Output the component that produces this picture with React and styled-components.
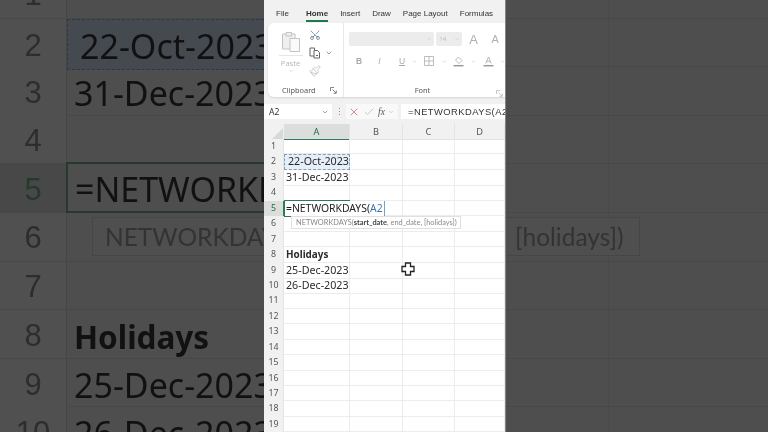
import React from "react";
import styled, { createGlobalStyle } from "styled-components";
import { Scissors, Paintbrush, ChevronDown, X, Check } from "lucide-react";

const GlobalStyle = createGlobalStyle`
  html, body { margin: 0; padding: 0; background: #4e4e4e; }
  #root { width: 768px; height: 432px; overflow: hidden; }
`;

const Page = styled.div`
  display: grid;
  grid-template-columns: 264px 241px 263px;
  width: 768px;
  height: 432px;
  overflow: hidden;
  filter: blur(0.35px);
  font-family: "Noto Sans", "Liberation Sans", sans-serif;
`;

/* dimmed zoomed-in sheet on both sides */
const Backdrop = styled.div`
  background: #4e4e4e;
  overflow: hidden;
  height: 432px;
  position: relative;
  ${(p) => p.$right && "border-left: 1px solid #858585; box-sizing: border-box;"}
`;

const BackdropRows = styled.div`
  margin-top: -30px;
`;

const BigRow = styled.div`
  position: relative;
  display: grid;
  grid-template-columns: ${(p) => (p.$right ? "103px 1fr" : "67px 1fr")};
  height: 48.6px;
  box-sizing: border-box;
  border-bottom: 1px solid #484848;
`;

const BigHead = styled.div`
  display: flex;
  align-items: center;
  justify-content: center;
  box-sizing: border-box;
  padding-top: 3px;
  font-family: "Liberation Sans", sans-serif;
  font-size: 31px;
  color: ${(p) => (p.$active ? "#243a2c" : "#2d2d2d")};
  background: ${(p) => (p.$active ? "#484848" : "#505050")};
  border-right: 1px solid #464646;
`;

const BigGap = styled.div`
  border-right: 1px solid #4a4a4a;
`;

const BigCell = styled.div`
  display: flex;
  align-items: center;
  white-space: nowrap;
  box-sizing: border-box;
  margin-top: ${(p) => (p.$active ? "-2px" : "0")};
  height: ${(p) => (p.$active ? "51px" : "auto")};
  margin-left: ${(p) => (p.$active ? "-1px" : "0")};
  padding-top: ${(p) => (p.$bold ? "5px" : "3px")};
  padding-left: ${(p) => (p.$copied ? "12px" : "7px")};
  font-size: ${(p) => (p.$bold ? "31.5px" : "34px")};
  font-weight: ${(p) => (p.$bold ? 700 : 400)};
  color: #111;
  background: ${(p) => (p.$copied ? "#454a50" : "transparent")};
  border: ${(p) =>
    p.$copied ? "1.5px dashed #2b3a44" : p.$active ? "2px solid #25392c" : "none"};
  border-right: none;
`;

const BigTip = styled.div`
  position: absolute;
  top: 4px;
  height: 39px;
  box-sizing: border-box;
  display: flex;
  align-items: center;
  white-space: nowrap;
  font-family: "Lato", sans-serif;
  font-size: 24.5px;
  color: #333;
  background: #4f4f4f;
  border: 1px solid #464646;
  ${(p) => (p.$right ? "left: 0; width: 134px; padding-left: 9px; border-left: none;" : "left: 92px; width: 300px; padding-left: 12px;")}
`;

const Phone = styled.div`
  display: flex;
  flex-direction: column;
  background: #f1f1f1;
  height: 432px;
  overflow: hidden;
  position: relative;
`;

const Tabs = styled.div`
  flex: none;
  display: flex;
  height: 23px;
  padding-left: 12px;
  gap: 12px;
  align-items: flex-start;
`;

const Tab = styled.div`
  position: relative;
  padding-top: 8px;
  font-family: "Liberation Sans", sans-serif;
  font-size: 8px;
  line-height: 12px;
  white-space: nowrap;
  color: #333;
  font-weight: ${(p) => (p.$active ? 700 : 400)};
  margin-left: ${(p) => (p.$active ? "5px" : "0")};
  ${(p) =>
    p.$active &&
    `&::after { content: ""; position: absolute; left: 0; right: 0; top: 20px; height: 1.5px; background: #1b7a4b; }`}
`;

const Ribbon = styled.div`
  flex: none;
  display: flex;
  height: 74px;
  margin-left: 4px;
  background: #fff;
  border-radius: 6px 0 0 6px;
  box-shadow: 0 1px 2px #d4d4d4;
`;

const ClipGroup = styled.div`
  width: 76px;
  flex: none;
  box-sizing: border-box;
  border-right: 1px solid #e8e8e8;
  position: relative;
  display: grid;
  grid-template-columns: 41px 1fr;
  grid-template-rows: 59px 1fr;
`;

const PasteCol = styled.div`
  display: flex;
  flex-direction: column;
  align-items: center;
  padding-top: 7px;
  margin-left: 4px;
  color: #b9b9b9;
`;

const PasteLabel = styled.div`
  width: 24px;
  margin-top: 2px;
  padding-top: 2px;
  border-top: 1px solid #e6e6e6;
  text-align: center;
  font-size: 7.5px;
  line-height: 10px;
`;

const SmallTools = styled.div`
  display: flex;
  flex-direction: column;
  align-items: flex-start;
  gap: 5px;
  padding: 5px 0 0 0;
`;

const ToolLine = styled.div`
  display: flex;
  align-items: center;
  gap: 4px;
  height: 13px;
`;

const GroupLabel = styled.div`
  grid-column: 1 / -1;
  display: flex;
  align-items: center;
  padding: 0 8px 0 14px;
  font-size: 7.4px;
  color: #555;
  position: relative;
`;

const Launcher = styled.svg`
  position: absolute;
  right: ${(p) => p.$right}px;
  top: 5px;
`;

const FontGroup = styled.div`
  flex: 1;
  min-width: 0;
  display: flex;
  flex-direction: column;
  padding: 9px 0 0 5px;
`;

const FontRow = styled.div`
  display: flex;
  align-items: center;
  height: 14px;
  gap: 2px;
`;

const Combo = styled.div`
  width: ${(p) => p.$w}px;
  height: 14px;
  box-sizing: border-box;
  background: #ececec;
  border-radius: 2px;
  display: flex;
  align-items: center;
  justify-content: space-between;
  padding: 0 2px 0 3px;
  font-size: 6px;
  color: #bbb;
`;

const GrowA = styled.div`
  width: ${(p) => p.$w}px;
  text-align: center;
  font-family: "Liberation Sans", sans-serif;
  font-size: ${(p) => p.$size}px;
  color: #b0b0b0;
`;

const FormatRow = styled.div`
  display: flex;
  align-items: center;
  height: 14px;
  margin-top: 8px;
  padding-left: 5px;
`;

const FormatSlot = styled.div`
  width: ${(p) => p.$w}px;
  flex: none;
  display: flex;
  justify-content: center;
  font-family: "Liberation Sans", sans-serif;
  font-size: 8.5px;
  color: #aaa;
  font-weight: ${(p) => (p.$bold ? 700 : 400)};
  font-style: ${(p) => (p.$italic ? "italic" : "normal")};
  text-decoration: ${(p) => (p.$under ? "underline" : "none")};
`;

const FontLabel = styled.div`
  margin-top: 17px;
  text-align: center;
  padding-right: 9px;
  font-size: 7.4px;
  color: #555;
  position: relative;
`;

const FormulaBar = styled.div`
  flex: none;
  display: flex;
  align-items: center;
  height: 15px;
  margin-top: 7px;
`;

const NameBox = styled.div`
  width: 68px;
  height: 15px;
  box-sizing: border-box;
  background: #fff;
  display: flex;
  align-items: center;
  justify-content: space-between;
  padding: 0 3px 0 5px;
  font-size: 8.6px;
  color: #333;
  flex: none;
`;

const BarTools = styled.div`
  width: 69px;
  flex: none;
  display: flex;
  align-items: center;
  height: 15px;
`;

const Dots = styled.div`
  width: 14px;
  text-align: center;
  font-size: 9px;
  line-height: 15px;
  color: #888;
`;

const ToolGroup = styled.div`
  flex: 1;
  background: #f9f9f9;
  height: 15px;
  display: flex;
  align-items: center;
  gap: 3px;
  padding-left: 2px;
  margin-right: 3px;
`;

const Fx = styled.span`
  font-family: "Liberation Serif", serif;
  font-style: italic;
  font-size: 9.5px;
  color: #555;
`;

const FormulaInput = styled.div`
  flex: 1;
  min-width: 0;
  height: 15px;
  background: #fff;
  padding-left: 7px;
  overflow: hidden;
  font-family: "Liberation Sans", sans-serif;
  font-size: 9.4px;
  letter-spacing: 0.45px;
  line-height: 15px;
  white-space: nowrap;
  color: #333;
`;

const Sheet = styled.div`
  margin-top: 5px;
  flex: 1;
  min-height: 0;
  position: relative;
  background: #fff;
`;

const ColHeads = styled.div`
  display: grid;
  grid-template-columns: 20px 66px 53px 52px 50px;
  height: 15px;
  background: #f1f1f1;
`;

const Corner = styled.div`
  position: relative;
  overflow: hidden;
  &::after {
    content: "";
    position: absolute;
    right: 1px;
    bottom: 1px;
    border-style: solid;
    border-width: 0 0 11px 11px;
    border-color: transparent transparent #d8d8d8 transparent;
  }
`;

const ColHead = styled.div`
  box-sizing: border-box;
  text-align: center;
  font-size: 9.2px;
  line-height: 15px;
  color: ${(p) => (p.$active ? "#1f6e46" : "#555")};
  background: ${(p) => (p.$active ? "#dcdedd" : "transparent")};
  border-bottom: ${(p) => (p.$active ? "1px solid #2e7d57" : "1px solid #e2e2e2")};
  border-right: 1px solid #e4e4e4;
`;

const Row = styled.div`
  position: relative;
  display: grid;
  grid-template-columns: 20px 66px 53px 52px 50px;
  height: 15.45px;
`;

const RowHead = styled.div`
  background: ${(p) => (p.$active ? "#dcdedd" : "#f1f1f1")};
  color: ${(p) => (p.$active ? "#1f6e46" : "#555")};
  font-size: 8.8px;
  line-height: 15.45px;
  text-align: center;
  box-sizing: border-box;
  border-right: 1px solid ${(p) => (p.$active ? "#2e7d57" : "#e4e4e4")};
`;

const Cell = styled.div`
  box-sizing: border-box;
  border-right: 1px solid #ececec;
  border-bottom: 1px solid #ececec;
  font-size: ${(p) => (p.$bold ? "9.9px" : "10.7px")};
  line-height: 15px;
  padding-left: 2px;
  white-space: nowrap;
  color: #2b2b2b;
  font-weight: ${(p) => (p.$bold ? 700 : 400)};
`;

const CopiedCell = styled(Cell)`
  padding-left: 3px;
  background: #e6eef8;
  border: 1px dashed #7fa0b8;
  line-height: 13px;
`;

const ActiveCell = styled(Cell)`
  position: relative;
  z-index: 2;
  overflow: visible;
  border: none;
  padding: 0;
  &::before {
    content: "";
    position: absolute;
    z-index: 1;
    inset: -0.5px 0 -0.5px -0.5px;
    border: 1px solid #2c7a52;
    border-right: none;
  }
`;

const ActiveText = styled.div`
  position: relative;
  display: inline-block;
  padding-left: 2px;
  padding-right: 1px;
  background: #fff;
  height: 15px;
  font-size: 10.4px;
  color: #222;
  border-right: 1px solid #7f9fbf;
`;

const Ref = styled.span`
  color: #3b77b5;
`;

const ArgTip = styled.div`
  position: absolute;
  left: 27px;
  top: 0;
  z-index: 3;
  height: 13px;
  box-sizing: border-box;
  padding: 0 3px 0 4px;
  background: #fff;
  border: 1px solid #e0e0e0;
  font-family: "Lato", sans-serif;
  font-size: 7.4px;
  line-height: 11px;
  white-space: nowrap;
  color: #888;
  b { color: #444; }
`;

const PlusCursor = styled.svg`
  position: absolute;
  left: 137px;
  top: 138px;
  z-index: 4;
`;

const BIG_ROWS = [
  { n: 1 },
  { n: 2, text: "22-Oct-2023", copied: true },
  { n: 3, text: "31-Dec-2023" },
  { n: 4 },
  { n: 5, text: "=NETWORKDAYS(A2", active: true },
  { n: 6, tip: true },
  { n: 7 },
  { n: 8, text: "Holidays", bold: true },
  { n: 9, text: "25-Dec-2023" },
  { n: 10, text: "26-Dec-2023" },
];

const ROWS = {
  2: { text: "22-Oct-2023", copied: true },
  3: { text: "31-Dec-2023" },
  8: { text: "Holidays", bold: true },
  9: { text: "25-Dec-2023" },
  10: { text: "26-Dec-2023" },
};

const Chev = ({ size = 7, color = "#aaa" }) => (
  <ChevronDown size={size} color={color} strokeWidth={2} />
);

const PasteIcon = () => (
  <svg width="20" height="23" viewBox="0 0 20 23" fill="none" stroke="#c4c4c4" strokeWidth="1">
    <path d="M1.5 4h12.5v15h-12.5z" fill="#efefef" />
    <path d="M5 2.5h5.5v3.5h-5.5z" fill="#efefef" />
    <path d="M9 8.5h9.5v13h-9.5z" fill="#fafafa" />
  </svg>
);

const CopyIcon = () => (
  <svg width="12" height="12" viewBox="0 0 12 12" fill="none" stroke="#666" strokeWidth="1">
    <path d="M1 1h4.5v8h-4.5z" />
    <path d="M5 3.5h3.5l2 2v5.5h-5.500z" fill="#fff" />
    <path d="M7 8.500h2" />
  </svg>
);

const LauncherIcon = ({ right, color = "#777" }) => (
  <Launcher $right={right} width="7" height="7" viewBox="0 0 7 7" fill="none" stroke={color} strokeWidth="0.9">
    <path d="M0.500 4v-3.500h3.500" />
    <path d="M2.500 2.500l3.500 3.500M3.500 6.300h2.800v-2.800" />
  </Launcher>
);

const BordersIcon = () => (
  <svg width="10" height="10" viewBox="0 0 10 10" fill="none" stroke="#b5b5b5" strokeWidth="0.9">
    <path d="M0.500 0.500h9v9h-9zM5 0.500v9M0.500 5h9" />
  </svg>
);

const FillIcon = () => (
  <svg width="11" height="11" viewBox="0 0 11 11" fill="none" stroke="#b0b0b0" strokeWidth="0.9">
    <path d="M5.500 1l3.500 3.500-3 3-3.500-3.500z" />
    <path d="M0.500 9.700h10" stroke="#9a9a9a" strokeWidth="1.500" />
  </svg>
);

const ColorIcon = () => (
  <svg width="11" height="11" viewBox="0 0 11 11" fill="none" stroke="#b0b0b0" strokeWidth="0.9">
    <path d="M2.800 7.500l2.700-6.500 2.700 6.500M3.800 5.300h3.400" />
    <path d="M0.500 9.700h10" stroke="#9a9a9a" strokeWidth="1.500" />
  </svg>
);

const Ribbonbar = () => (
  <Ribbon>
    <ClipGroup>
      <PasteCol>
        <PasteIcon />
        <PasteLabel>Paste</PasteLabel>
        <Chev size={6} color="#c4c4c4" />
      </PasteCol>
      <SmallTools>
        <ToolLine>
          <Scissors size={12} color="#50708a" strokeWidth={1.4} style={{ transform: "rotate(-90deg)" }} />
        </ToolLine>
        <ToolLine>
          <CopyIcon />
          <Chev size={8} color="#666" />
        </ToolLine>
        <ToolLine>
          <Paintbrush size={12} color="#b5b5b5" strokeWidth={1.4} />
        </ToolLine>
      </SmallTools>
      <GroupLabel>
        Clipboard
        <LauncherIcon right={6} />
      </GroupLabel>
    </ClipGroup>
    <FontGroup>
      <FontRow>
        <Combo $w={87}>
          <span />
          <Chev size={6} color="#c4c4c4" />
        </Combo>
        <Combo $w={26}>
          14
          <Chev size={6} color="#c4c4c4" />
        </Combo>
        <GrowA $w={20} $size={13}>A</GrowA>
        <GrowA $w={20} $size={11}>A</GrowA>
      </FontRow>
      <FormatRow>
        <FormatSlot $w={10} $bold>B</FormatSlot>
        <FormatSlot $w={31} $italic>I</FormatSlot>
        <FormatSlot $w={14} $under>U</FormatSlot>
        <FormatSlot $w={10}><Chev size={5} /></FormatSlot>
        <FormatSlot $w={20}><BordersIcon /></FormatSlot>
        <FormatSlot $w={10}><Chev size={5} /></FormatSlot>
        <FormatSlot $w={18}><FillIcon /></FormatSlot>
        <FormatSlot $w={12}><Chev size={5} /></FormatSlot>
        <FormatSlot $w={18}><ColorIcon /></FormatSlot>
        <FormatSlot $w={10}><Chev size={5} /></FormatSlot>
      </FormatRow>
      <FontLabel>
        Font
        <LauncherIcon right={2} color="#c0c0c0" />
      </FontLabel>
    </FontGroup>
  </Ribbon>
);

const Formula = () => (
  <FormulaBar>
    <NameBox>
      A2
      <Chev size={8} color="#777" />
    </NameBox>
    <BarTools>
      <Dots>⋮</Dots>
      <ToolGroup>
        <X size={12} color="#c4564e" strokeWidth={1.4} />
        <Check size={12} color="#9cc0aa" strokeWidth={1.4} />
        <Fx>fx</Fx>
        <Chev size={6} color="#aaa" />
      </ToolGroup>
    </BarTools>
    <FormulaInput>=NETWORKDAYS(A2</FormulaInput>
  </FormulaBar>
);

const Grid = () => (
  <Sheet>
    <ColHeads>
      <Corner />
      <ColHead $active>A</ColHead>
      <ColHead>B</ColHead>
      <ColHead>C</ColHead>
      <ColHead>D</ColHead>
    </ColHeads>
    {Array.from({ length: 20 }, (_, i) => i + 1).map((n) => {
      const data = ROWS[n] || {};
      return (
        <Row key={n}>
          <RowHead $active={n === 5}>{n}</RowHead>
          {n === 5 ? (
            <ActiveCell>
              <ActiveText>
                =NETWORKDAYS(<Ref>A2</Ref>
              </ActiveText>
            </ActiveCell>
          ) : data.copied ? (
            <CopiedCell>{data.text}</CopiedCell>
          ) : (
            <Cell $bold={data.bold}>{data.text}</Cell>
          )}
          <Cell />
          <Cell />
          <Cell />
          {n === 6 && (
            <ArgTip>
              NETWORKDAYS(<b>start_date</b>, end_date, [holidays])
            </ArgTip>
          )}
        </Row>
      );
    })}
    <PlusCursor width="14" height="14" viewBox="0 0 14 14">
      <path
        d="M4.500 1h5v3.500h3.500v5h-3.500v3.500h-5v-3.500h-3.500v-5h3.500z"
        fill="#fff"
        stroke="#222"
        strokeWidth="1.300"
      />
    </PlusCursor>
  </Sheet>
);

const App = () => (
  <Page>
    <GlobalStyle />
    <Backdrop>
      <BackdropRows>
        {BIG_ROWS.map((row) => (
          <BigRow key={row.n}>
            <BigHead $active={row.active}>{row.n}</BigHead>
            <BigCell $copied={row.copied} $active={row.active} $bold={row.bold}>
              {row.text}
            </BigCell>
            {row.tip && <BigTip>NETWORKDAYS(start_date</BigTip>}
          </BigRow>
        ))}
      </BackdropRows>
    </Backdrop>
    <Phone>
      <Tabs>
        <Tab>File</Tab>
        <Tab $active>Home</Tab>
        <Tab>Insert</Tab>
        <Tab>Draw</Tab>
        <Tab>Page Layout</Tab>
        <Tab>Formulas</Tab>
      </Tabs>
      <Ribbonbar />
      <Formula />
      <Grid />
    </Phone>
    <Backdrop $right>
      <BackdropRows>
        {BIG_ROWS.map((row) => (
          <BigRow key={row.n} $right>
            <BigGap />
            <div />
            {row.tip && <BigTip $right>[holidays])</BigTip>}
          </BigRow>
        ))}
      </BackdropRows>
    </Backdrop>
  </Page>
);

export default App;
